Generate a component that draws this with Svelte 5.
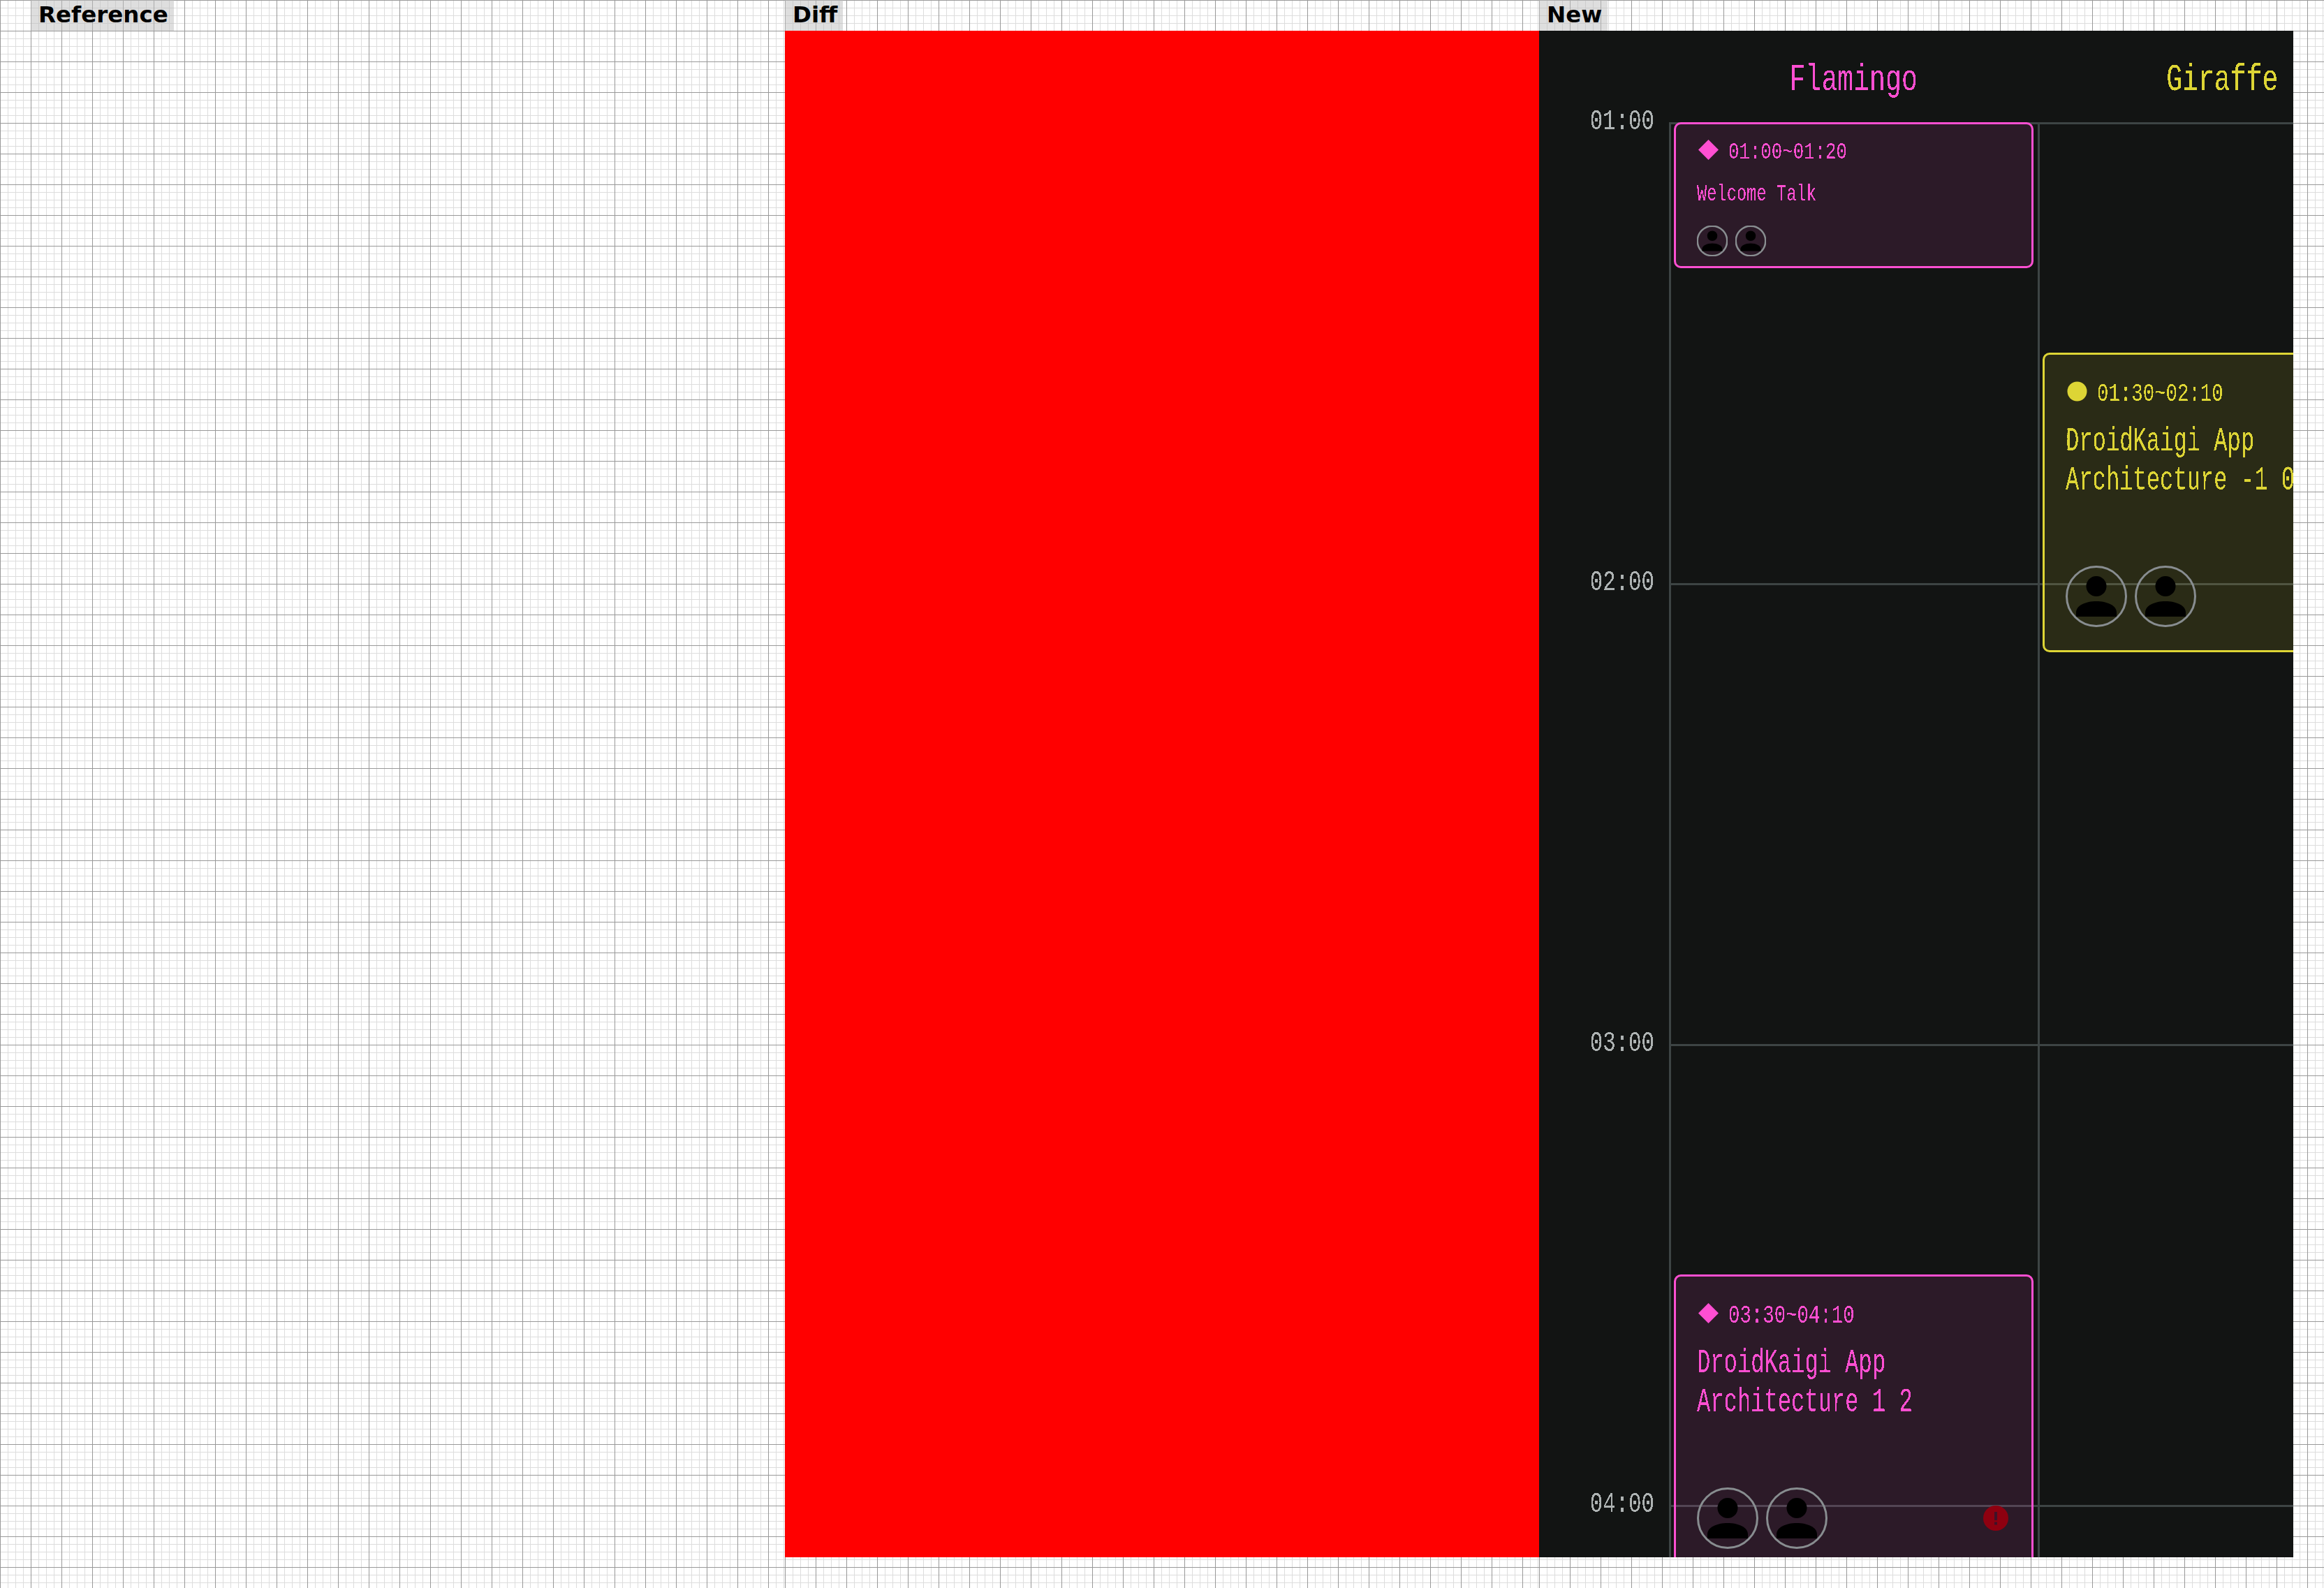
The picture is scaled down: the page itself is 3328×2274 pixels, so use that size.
<script>
  const hours = ['01:00', '02:00', '03:00', '04:00'];
  const minutePx = 11;
  const rooms = [
    {
      name: 'Flamingo',
      tone: 'pink',
      sessions: [
        { start: 0, length: 20, time: '01:00~01:20', lines: ['Welcome Talk'], small: true },
        { start: 150, length: 40, time: '03:30~04:10', lines: ['DroidKaigi App', 'Architecture 1 2'], alert: true }
      ]
    },
    {
      name: 'Giraffe',
      tone: 'yellow',
      sessions: [
        { start: 30, length: 40, time: '01:30~02:10', lines: ['DroidKaigi App', 'Architecture -1 0'] }
      ]
    }
  ];
  const panels = ['Reference', 'Diff', 'New'];
</script>

{#snippet avatar()}
  <svg class="avatar" viewBox="0 0 88 88" aria-hidden="true">
    <circle class="ring" cx="44" cy="44" r="42.5" />
    <circle cx="44" cy="29.5" r="14.5" />
    <path d="M15 73V67C15 57 29 51 44 51S73 57 73 67V73Z" />
  </svg>
{/snippet}

<svg class="defs" aria-hidden="true">
  <filter id="crisp" color-interpolation-filters="sRGB" x="0" y="0" width="100%" height="100%">
    <feComponentTransfer>
      <feFuncA type="discrete" tableValues="0 0 1 1" />
    </feComponentTransfer>
  </filter>
</svg>

<div class="page">
  {#each panels as label}
    <section class="panel" class:first={label === 'Reference'} class:last={label === 'New'}>
      <div class="label">{label}</div>
      {#if label === 'Diff'}
        <div class="stage red"></div>
      {:else if label === 'New'}
        <div class="stage timetable">
          <div class="corner"></div>
          {#each rooms as room}
            <div class="room {room.tone}"><span class="room-name">{room.name}</span></div>
          {/each}
          <div class="hours">
            {#each hours as hour}
              <div class="hour"><span class="hour-text">{hour}</span></div>
            {/each}
          </div>
          <div class="tracks">
            {#each rooms as room}
              <div class="track {room.tone}">
                {#each room.sessions as s}
                  <article
                    class="card"
                    class:small={s.small}
                    style="top:{s.start * minutePx}px;height:{s.length * minutePx - minutePx}px"
                  >
                    <div class="when">
                      <span class="mark"></span>
                      <span class="time">{s.time}</span>
                    </div>
                    <div class="title">
                      {#each s.lines as line}<div class="title-line">{line}</div>{/each}
                    </div>
                    <div class="foot">
                      <div class="people">
                        {@render avatar()}
                        {@render avatar()}
                      </div>
                      {#if s.alert}
                        <svg class="alert" viewBox="0 0 36 36" aria-hidden="true">
                          <circle cx="18" cy="18" r="18" />
                          <rect class="bang" x="16" y="9" width="4" height="12" />
                          <rect class="bang" x="16" y="23.5" width="4" height="4" />
                        </svg>
                      {/if}
                    </div>
                  </article>
                {/each}
              </div>
            {/each}
          </div>
        </div>
      {/if}
    </section>
  {/each}
</div>

<style>
  :global(body) {
    margin: 0;
    background: #fff;
  }
  .defs {
    position: absolute;
    width: 0;
    height: 0;
  }
  .page {
    display: flex;
    width: 3328px;
    height: 2274px;
    overflow: hidden;
  }
  .panel {
    height: 2274px;
    flex: none;
    width: 1080px;
    box-sizing: border-box;
    background-color: #fff;
    background-image:
      linear-gradient(to right, #999 1px, transparent 1px),
      linear-gradient(to bottom, #999 1px, transparent 1px),
      linear-gradient(to right, #ddd 1px, transparent 1px),
      linear-gradient(to bottom, #ddd 1px, transparent 1px);
    background-size: 44px 44px, 44px 44px, 11px 11px, 11px 11px;
  }
  .first {
    width: 1124px;
    padding-left: 44px;
  }
  .last {
    width: 1124px;
  }
  .label {
    display: table;
    height: 44px;
    padding: 0 8px 0 11px;
    box-sizing: border-box;
    background: rgba(190, 190, 190, 0.5);
    color: #000;
    font: 700 32.5px/42px "DejaVu Sans", sans-serif;
  }
  .stage {
    width: 1080px;
    height: 2186px;
  }
  .red {
    background: #f00;
  }
  .timetable {
    display: grid;
    grid-template-columns: 186px 528px 528px;
    grid-template-rows: 131px 1fr;
    overflow: hidden;
    background: #121413;
    font-family: "Liberation Mono", monospace;
    --pink: #ff4fd2;
    --yellow: #ddd535;
    --rule: #3d4444;
  }
  .pink {
    --tone: var(--pink);
    --wash: rgba(255, 79, 210, 0.115);
  }
  .yellow {
    --tone: var(--yellow);
    --wash: rgba(221, 213, 53, 0.12);
  }
  .room {
    display: flex;
    justify-content: center;
    align-items: flex-start;
    padding-top: 45px;
    color: var(--tone);
    font-size: 53px;
    line-height: 53px;
  }
  .room-name {
    display: block;
    transform: scaleX(0.72);
    filter: url(#crisp);
  }
  .hours {
    margin-top: -24px;
    grid-column: 1;
    grid-row: 2;
  }
  .hour {
    height: 660px;
    display: flex;
    justify-content: flex-end;
    padding-right: 21px;
    color: #aeb3b3;
    font-size: 41px;
    line-height: 47px;
  }
  .hour-text {
    display: block;
    transform: scaleX(0.75);
    transform-origin: right center;
    filter: url(#crisp);
  }
  .tracks {
    grid-column: 2 / 4;
    grid-row: 2;
    display: flex;
    background-image: linear-gradient(to bottom, var(--rule) 3px, transparent 3px);
    background-size: 100% 660px;
  }
  .track {
    position: relative;
    flex: none;
    width: 528px;
    box-sizing: border-box;
    border-left: 3px solid var(--rule);
  }
  .card {
    position: absolute;
    left: 4px;
    width: 515px;
    box-sizing: border-box;
    display: flex;
    flex-direction: column;
    padding: 36px 33px 33px 30px;
    border: 3px solid var(--tone);
    border-radius: 10px;
    background: var(--wash);
    color: var(--tone);
  }
  .card.small {
    padding-top: 20px;
    padding-bottom: 14px;
  }
  .when {
    display: flex;
    align-items: center;
    height: 33px;
    gap: 12px;
  }
  .mark {
    flex: none;
    width: 33px;
    height: 33px;
    background: var(--tone);
  }
  .pink .mark {
    clip-path: polygon(50% 6%, 94% 50%, 50% 94%, 6% 50%);
  }
  .yellow .mark {
    clip-path: circle(14px at 50% 50%);
  }
  .time {
    display: block;
    font-size: 36.5px;
    line-height: 33px;
    white-space: nowrap;
    transform: translateY(4px) scaleX(0.75);
    transform-origin: left center;
    filter: url(#crisp);
  }
  .small .time {
    font-size: 33px;
    transform: translateY(4px) scaleX(0.78);
  }
  .title {
    margin-top: 27px;
    font-size: 48px;
    line-height: 56px;
    white-space: pre;
    transform: scaleX(0.67);
    transform-origin: left center;
    filter: url(#crisp);
  }
  .small .title {
    margin-top: 31px;
    font-size: 33px;
    line-height: 34px;
    transform: scaleX(0.72);
  }
  .foot {
    margin-top: auto;
    display: flex;
    justify-content: space-between;
    align-items: center;
  }
  .people {
    display: flex;
    gap: 11px;
  }
  .avatar {
    display: block;
    width: 88px;
    height: 88px;
    fill: #000;
  }
  .small .avatar {
    width: 44px;
    height: 44px;
  }
  .ring {
    fill: none;
    stroke: #888d90;
    stroke-width: 3;
  }
  .small .ring {
    stroke-width: 5;
  }
  .alert {
    display: block;
    width: 36px;
    height: 36px;
    fill: #8e0010;
  }
  .bang {
    fill: #3f1228;
  }
</style>
